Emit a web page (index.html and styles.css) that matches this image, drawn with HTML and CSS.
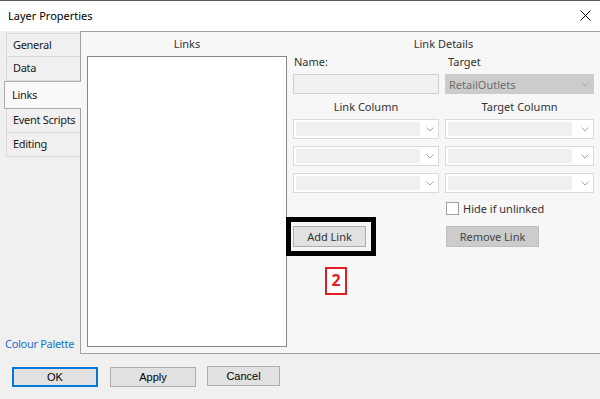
FILE: index.html
```html
<!DOCTYPE html>
<html lang="en">
<head>
    <meta charset="UTF-8">
    <title>Layer Properties</title>
    <link rel="stylesheet" href="styles.css">
</head>
<body>
    <div class="dialog">
        <div class="titlebar">
            <span class="title">Layer Properties</span>
            <svg class="close" width="11" height="11" viewBox="0 0 11 11">
                <path d="M0.5 0.5 L10.5 10.5 M10.5 0.5 L0.5 10.5" stroke="#000" stroke-width="1" fill="none"/>
            </svg>
        </div>

        <div class="main">
            <div class="tabstrip">
                <div class="tab">General</div>
                <div class="tab">Data</div>
                <div class="tab active">Links</div>
                <div class="tab">Event Scripts</div>
                <div class="tab">Editing</div>
                <a href="#" class="palette">Colour Palette</a>
            </div>

            <div class="panel">
                <div class="list-col">
                    <div class="heading">Links</div>
                    <div class="listbox"></div>
                </div>

                <div class="details">
                    <div class="heading">Link Details</div>
                    <div class="grid">
                        <div class="label">Name:</div>
                        <div class="label">Target</div>

                        <div class="textbox"></div>
                        <div class="combo disabled">
                            <span class="combo-text">RetailOutlets</span>
                            <svg class="chev" width="8" height="5" viewBox="0 0 8 5"><path d="M0.5 0.5 L4 4 L7.5 0.5" stroke="#a6a6a6" fill="none"/></svg>
                        </div>

                        <div class="colhead">Link Column</div>
                        <div class="colhead">Target Column</div>

                        <div class="combo"><span class="fill"></span><svg class="chev" width="8" height="5" viewBox="0 0 8 5"><path d="M0.5 0.5 L4 4 L7.5 0.5" stroke="#a6a6a6" fill="none"/></svg></div>
                        <div class="combo"><span class="fill"></span><svg class="chev" width="8" height="5" viewBox="0 0 8 5"><path d="M0.5 0.5 L4 4 L7.5 0.5" stroke="#a6a6a6" fill="none"/></svg></div>
                        <div class="combo"><span class="fill"></span><svg class="chev" width="8" height="5" viewBox="0 0 8 5"><path d="M0.5 0.5 L4 4 L7.5 0.5" stroke="#a6a6a6" fill="none"/></svg></div>
                        <div class="combo"><span class="fill"></span><svg class="chev" width="8" height="5" viewBox="0 0 8 5"><path d="M0.5 0.5 L4 4 L7.5 0.5" stroke="#a6a6a6" fill="none"/></svg></div>
                        <div class="combo"><span class="fill"></span><svg class="chev" width="8" height="5" viewBox="0 0 8 5"><path d="M0.5 0.5 L4 4 L7.5 0.5" stroke="#a6a6a6" fill="none"/></svg></div>
                        <div class="combo"><span class="fill"></span><svg class="chev" width="8" height="5" viewBox="0 0 8 5"><path d="M0.5 0.5 L4 4 L7.5 0.5" stroke="#a6a6a6" fill="none"/></svg></div>

                        <div></div>
                        <label class="check"><span class="box"></span>Hide if unlinked</label>

                        <div class="callout">
                            <button class="btn add">Add Link</button>
                        </div>
                        <button class="btn remove">Remove Link</button>

                        <div class="badge">2</div>
                    </div>
                </div>
            </div>
        </div>

        <div class="footer">
            <button class="dlg-btn ok">OK</button>
            <button class="dlg-btn">Apply</button>
            <button class="dlg-btn cancel">Cancel</button>
        </div>
    </div>
</body>
</html>
```

FILE: styles.css
```css
body {
    margin: 0;
    padding: 0;
    font-family: "Noto Sans", sans-serif;
    font-size: 11px;
    color: #1a1a1a;
    background: #f0f0f0;
}

.dialog {
    width: 600px;
    height: 399px;
    overflow: hidden;
    background: #f0f0f0;
}

.titlebar {
    height: 30px;
    border-top: 1px solid #5a5a5a;
    background: #ffffff;
    display: flex;
    align-items: center;
    justify-content: space-between;
    padding: 0 9px 0 8px;
}

.title {
    font-size: 11px;
    color: #000;
    margin-top: -2px;
}

.close {
    margin-top: -2px;
}

.main {
    height: 323px;
    display: flex;
}

.tabstrip {
    width: 80px;
    padding-top: 2px;
    display: flex;
    flex-direction: column;
    flex-shrink: 0;
    box-sizing: border-box;
}

.tab {
    height: 24px;
    line-height: 22px;
    margin-left: 6px;
    padding-left: 6px;
    border: 1px solid #d9d9d9;
    border-right: none;
    box-sizing: border-box;
    color: #1a1a1a;
    white-space: nowrap;
    overflow: hidden;
    letter-spacing: -0.3px;
}

.tab + .tab {
    border-top: none;
}

.tab.active {
    height: 28px;
    line-height: 26px;
    margin-left: 4px;
    margin-right: -1px;
    padding-left: 7px;
    border: 1px solid #adadad;
    border-right: none;
    background: #f9f9f9;
    position: relative;
    z-index: 1;
}

.tab.active + .tab {
    border-top: none;
}

.palette {
    margin-top: auto;
    margin-bottom: 3px;
    padding-left: 5px;
    color: #1a73c8;
    text-decoration: none;
    white-space: nowrap;
    letter-spacing: -0.3px;
}

.panel {
    flex: 1;
    display: flex;
    background: #f7f7f7;
    border: 1px solid #a0a0a0;
    border-right: none;
    padding-left: 6px;
}

.heading {
    height: 24px;
    line-height: 24px;
    text-align: center;
    color: #333;
}

.list-col {
    width: 200px;
}

.listbox {
    height: 291px;
    box-sizing: border-box;
    background: #ffffff;
    border: 1px solid #828790;
}

.details {
    width: 301px;
    margin-left: 6px;
}

.grid {
    display: grid;
    grid-template-columns: 146px 149px;
    column-gap: 6px;
    row-gap: 7px;
}

.label {
    height: 14px;
    line-height: 14px;
    margin-top: -1px;
    margin-bottom: -2px;
    padding-left: 1px;
    color: #333;
}

.label + .label {
    padding-left: 3px;
}

.textbox {
    height: 20px;
    box-sizing: border-box;
    border: 1px solid #cfcfcf;
    background: #f0f0f0;
}

.combo {
    height: 20px;
    box-sizing: border-box;
    border: 1px solid #d9d9d9;
    background: #ffffff;
    display: flex;
    align-items: center;
    padding: 0 4px 0 2px;
}

.combo .fill {
    width: 124px;
    height: 14px;
    background: #f0f0f0;
}

.combo .chev {
    margin-left: auto;
}

.combo.disabled {
    background: #cccccc;
    border-color: #cccccc;
    padding-left: 3px;
}

.combo-text {
    color: #6d6d6d;
}

.colhead {
    height: 11px;
    line-height: 11px;
    text-align: center;
    color: #333;
    white-space: nowrap;
}

.check {
    display: flex;
    align-items: center;
    margin-top: 1px;
    color: #333;
    height: 14px;
}

.check .box {
    width: 13px;
    height: 13px;
    box-sizing: border-box;
    border: 1px solid #a0a0a0;
    background: #ffffff;
    margin-left: 1px;
    margin-right: 4px;
}

.callout {
    width: 90px;
    height: 39px;
    box-sizing: border-box;
    margin-left: -7px;
    margin-top: -5px;
    border: 5px solid #000;
    padding: 4px 5px 4px 2px;
}

.btn {
    font-family: "Noto Sans", sans-serif;
    font-size: 11px;
    height: 21px;
    padding: 0;
    box-sizing: border-box;
}

.btn.add {
    width: 73px;
    background: #e1e1e1;
    border: 1px solid #adadad;
    color: #333;
}

.btn.remove {
    width: 93px;
    margin-left: 1px;
    margin-top: 4px;
    background: #cccccc;
    border: 1px solid #bfbfbf;
    color: #444;
}

.badge {
    width: 22px;
    height: 28px;
    box-sizing: border-box;
    margin-left: 32px;
    margin-top: 4px;
    border: 2px solid #e51c23;
    background: #ffffff;
    color: #e51c23;
    font-weight: bold;
    font-size: 16px;
    line-height: 23px;
    text-align: center;
}

.footer {
    display: flex;
    padding: 13px 0 0 12px;
    gap: 12px;
}

.dlg-btn {
    font-family: "Liberation Sans", Arial, sans-serif;
    font-size: 11px;
    color: #000;
    width: 86px;
    height: 20px;
    padding: 0;
    background: #e1e1e1;
    border: 1px solid #adadad;
    box-sizing: border-box;
}

.dlg-btn.ok {
    border: 2px solid #0078d7;
}

.dlg-btn.cancel {
    width: 73px;
    margin-left: -1px;
    margin-top: -1px;
}
```
